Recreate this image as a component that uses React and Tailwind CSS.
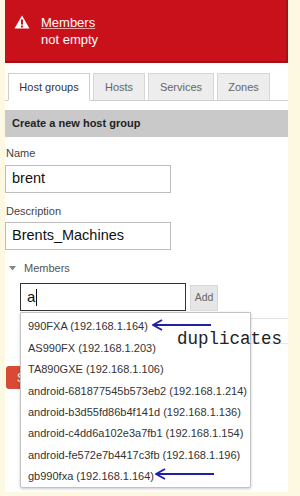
import React from "react";

const items = [
  "990FXA (192.168.1.164)",
  "AS990FX (192.168.1.203)",
  "TA890GXE (192.168.1.106)",
  "android-681877545b573eb2 (192.168.1.214)",
  "android-b3d55fd86b4f141d (192.168.1.136)",
  "android-c4dd6a102e3a7fb1 (192.168.1.154)",
  "android-fe572e7b4417c3fb (192.168.1.196)",
  "gb990fxa (192.168.1.164)",
];

function Arrow({ top, left }) {
  return (
    <svg
      className="absolute"
      style={{ top, left }}
      width="62"
      height="12"
      viewBox="0 0 62 12"
    >
      <path d="M2 6 H60" stroke="#1f1fa8" strokeWidth="2" fill="none" />
      <path d="M11 1 L2 6 L11 11" stroke="#1f1fa8" strokeWidth="2" fill="none" strokeLinejoin="round" />
    </svg>
  );
}

export default function App() {
  return (
    <div
      className="relative w-[300px] h-[496px] bg-[#fdf8e2] overflow-hidden"
      style={{ fontFamily: '"Liberation Sans", Arial, sans-serif' }}
    >
      <div className="ml-[5px] w-[283px] h-[492px] bg-white flex flex-col">
        {/* error banner */}
        <div className="h-[63px] bg-[#c9111b] border-b-2 border-r-2 border-[#a80e15] flex items-start pl-[9px] pt-[14px] gap-[11px]">
          <svg width="16" height="14" viewBox="0 0 16 14" className="mt-[1px]">
            <path d="M8 0.5 L15.5 13.5 H0.5 Z" fill="#ffffff" />
            <rect x="7" y="4.5" width="2" height="5" fill="#c9111b" />
            <rect x="7" y="10.5" width="2" height="2" fill="#c9111b" />
          </svg>
          <div className="text-white text-[13px] leading-[17px]">
            <div className="underline decoration-[#f3a0a0]">Members</div>
            <div>not empty</div>
          </div>
        </div>

        {/* tabs */}
        <div className="mt-[10px] flex items-end gap-[3px] pl-[3px] border-b border-[#cfcfcf] h-[28px]">
          <div className="w-[82px] h-[28px] -mb-px bg-white border border-[#cfcfcf] border-b-white flex items-center justify-center text-[11px] text-[#333]">
            Host groups
          </div>
          <div className="w-[52px] h-[27px] bg-[#ededed] border border-[#d6d6d6] border-b-0 flex items-center justify-center text-[11px] text-[#666]">
            Hosts
          </div>
          <div className="w-[66px] h-[27px] bg-[#ededed] border border-[#d6d6d6] border-b-0 flex items-center justify-center text-[11px] text-[#666]">
            Services
          </div>
          <div className="w-[53px] h-[27px] bg-[#ededed] border border-[#d6d6d6] border-b-0 flex items-center justify-center text-[11px] text-[#666]">
            Zones
          </div>
        </div>

        {/* header */}
        <div className="mt-[9px] h-[27px] bg-[#c9c9c9] flex items-center pl-[7px] text-[11px] font-bold text-[#222]">
          Create a new host group
        </div>

        {/* form */}
        <div className="mt-[7px] pl-px text-[11px] leading-[18px] text-[#444]">Name</div>
        <div className="mt-[3px] w-[166px] h-[28px] border border-[#bdbdbd] flex items-center pl-[6px] text-[14.5px] text-[#111]">
          brent
        </div>
        <div className="mt-[9px] pl-px text-[11px] leading-[18px] text-[#444]">Description</div>
        <div className="mt-[2px] w-[166px] h-[28px] border border-[#bdbdbd] flex items-center pl-[6px] text-[14.5px] text-[#111]">
          Brents_Machines
        </div>

        <div className="mt-[9px] h-[18px] flex items-center gap-[8px] pl-[4px] text-[11px] text-[#555]">
          <svg width="7" height="5" viewBox="0 0 7 5">
            <path d="M0 0 H7 L3.5 4.5 Z" fill="#888" />
          </svg>
          <span>Members</span>
        </div>

        <div className="mt-[6px] ml-[15px] flex items-end gap-[4px]">
          <div className="w-[166px] h-[28px] border border-[#333] flex items-center pl-[6px] text-[15px] text-[#111]">
            a<span className="w-px h-[17px] bg-[#111] ml-px" />
          </div>
          <div className="w-[28px] h-[26px] bg-[#e6e6e6] border border-[#dadada] flex items-center justify-center text-[10.5px] text-[#666]">
            Add
          </div>
        </div>

        <div className="mt-[7px] ml-[230px] h-px bg-[#e4e4e4]" />
        <div className="mt-[24px] ml-[230px] h-px bg-[#e8e8e8]" />

        <div className="mt-[22px] ml-px w-[15px] h-[23px] bg-[#d84a35] rounded-l-[3px] overflow-hidden flex items-center pl-[11px] text-[12px] text-white">
          Save
        </div>
      </div>

      {/* autocomplete dropdown */}
      <div className="absolute left-[20px] top-[312px] w-[231px] h-[176px] bg-white border border-[#c2c2c2] rounded-b-[2px] shadow-[0_1px_3px_rgba(0,0,0,0.2)] pt-[3px]">
        {items.map((t) => (
          <div key={t} className="h-[21.4px] flex items-center pl-[7px] text-[11px] text-[#333] whitespace-nowrap">
            {t}
          </div>
        ))}
      </div>

      <Arrow top={319} left={151} />
      <Arrow top={468} left={154} />

      <div
        className="absolute left-[177px] top-[329px] text-[17.5px] leading-[20px] text-[#222]"
        style={{ fontFamily: '"Liberation Mono", "Courier New", monospace' }}
      >
        duplicates
      </div>
    </div>
  );
}
